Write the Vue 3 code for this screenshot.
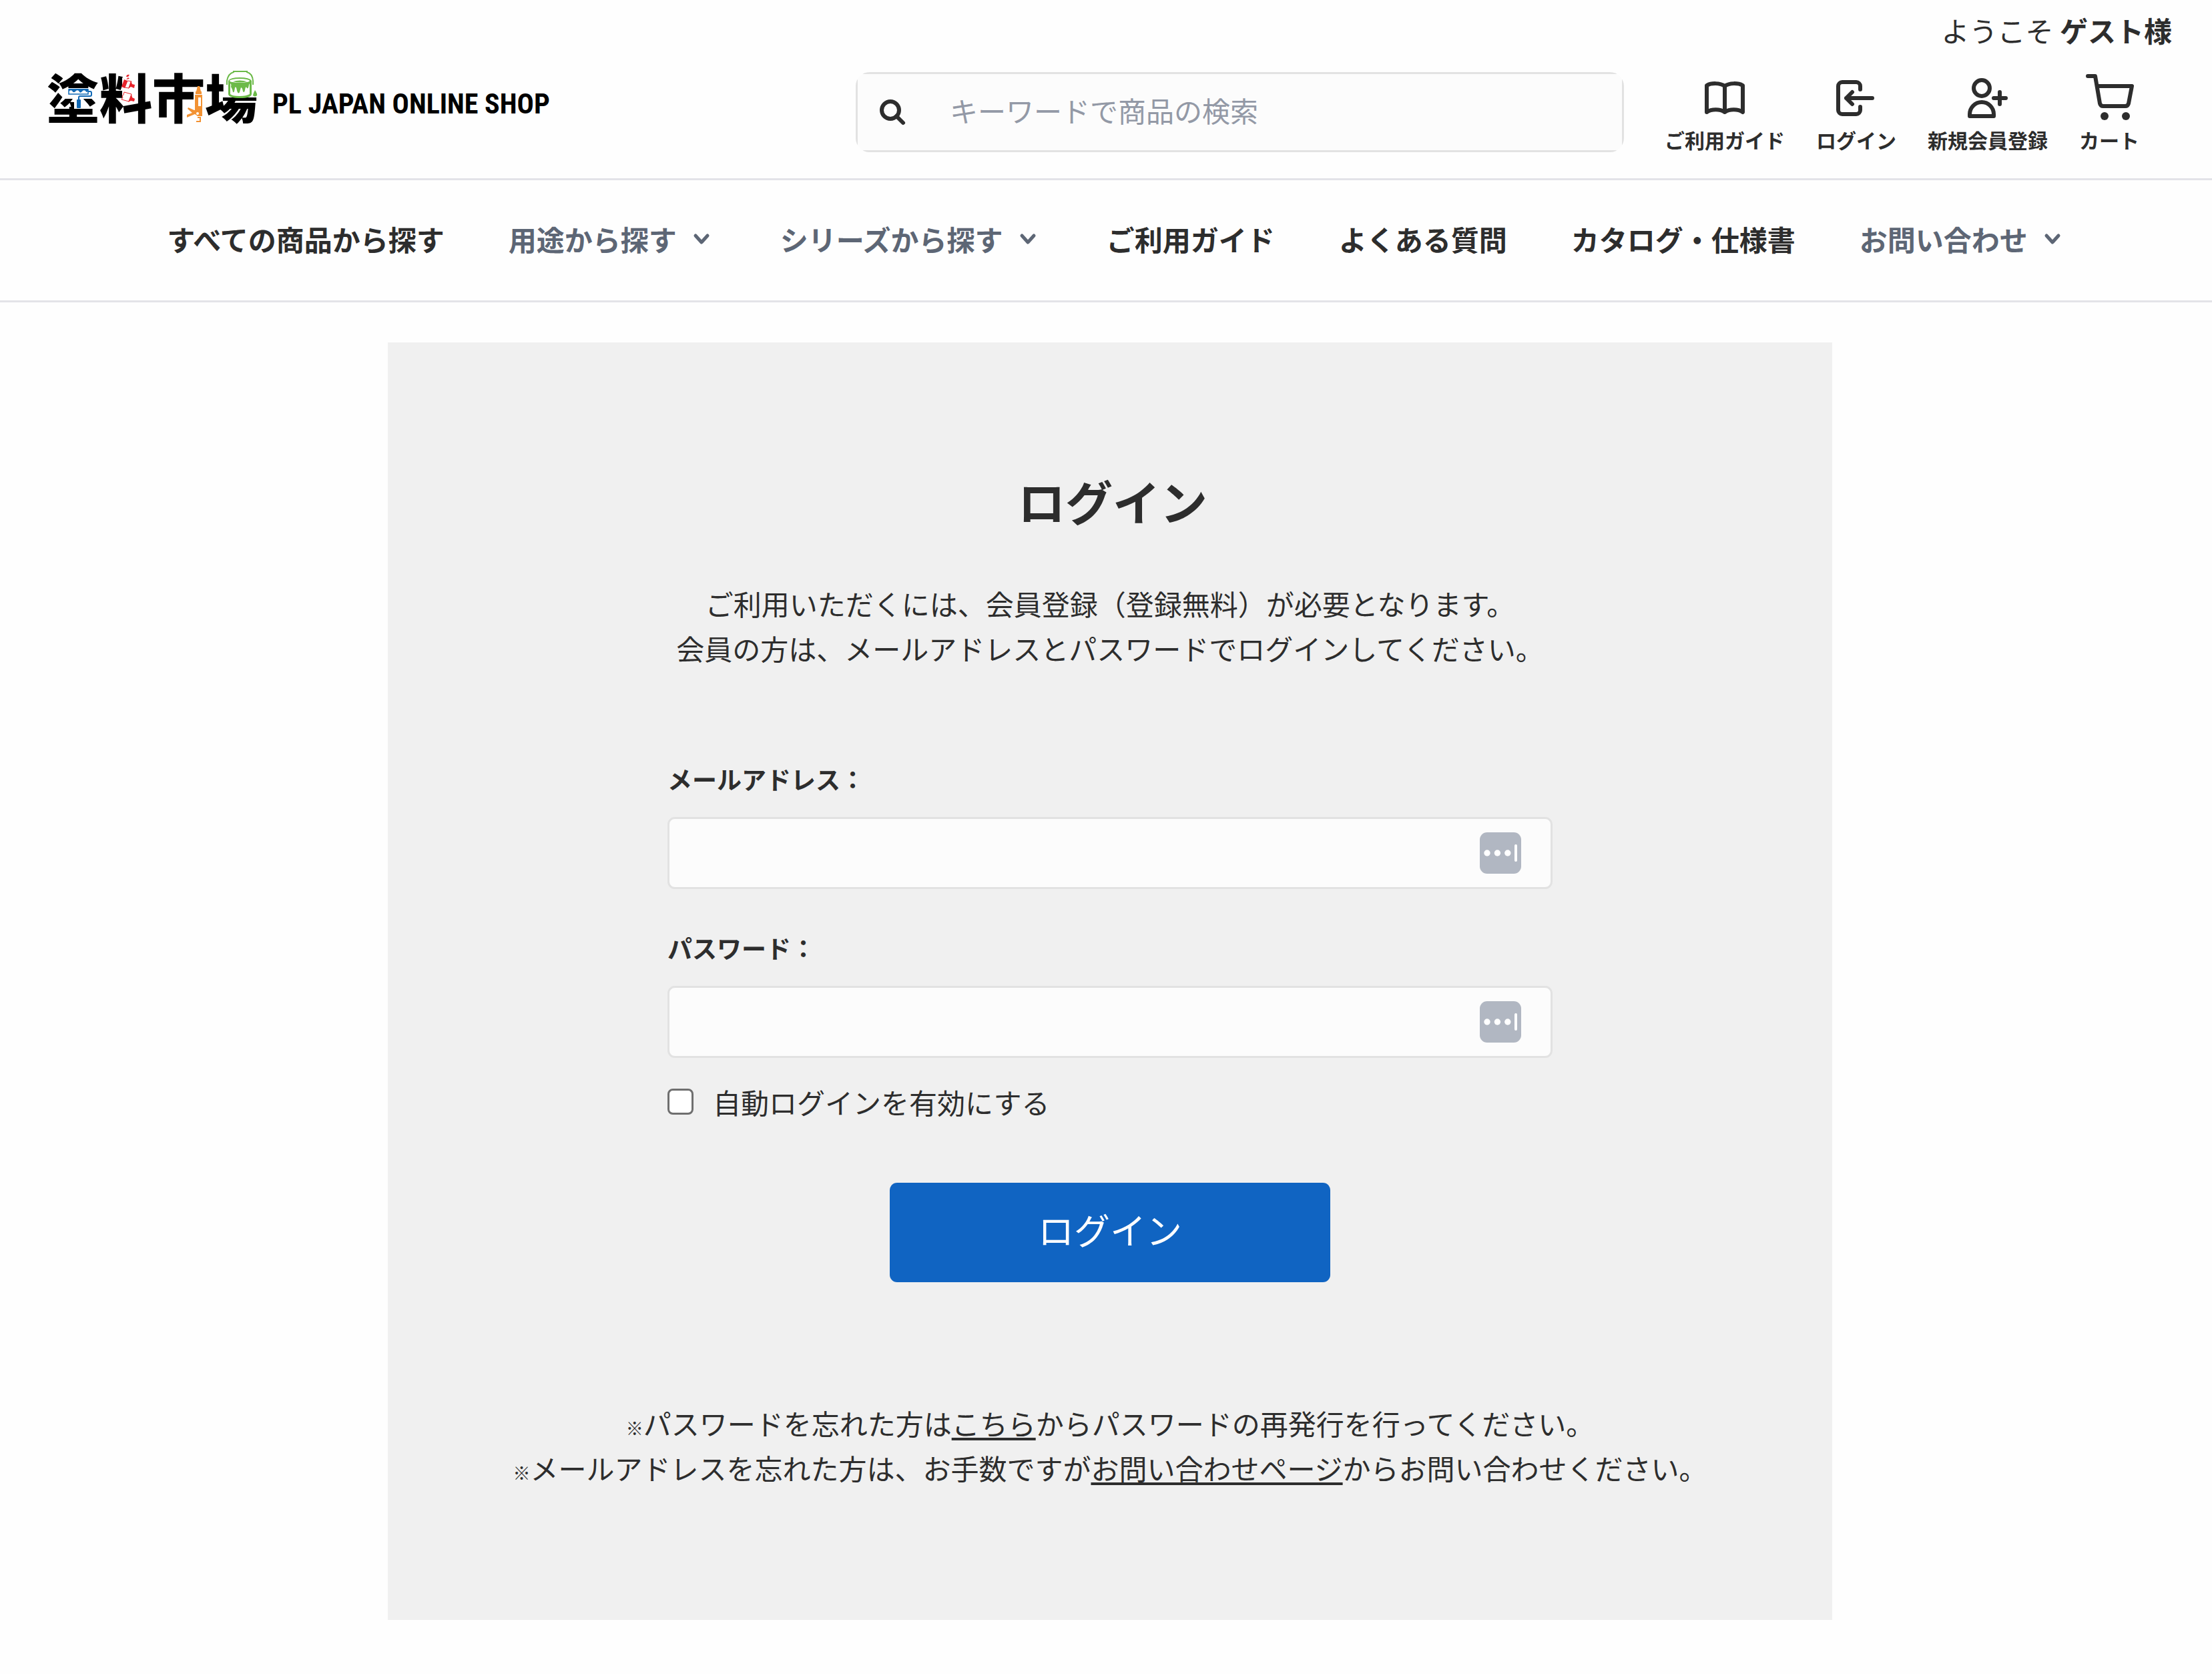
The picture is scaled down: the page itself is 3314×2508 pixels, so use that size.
<script setup>
import {ref} from "vue";

const keyword = ref('');
const email = ref('');
const password = ref('');
const autoLogin = ref(false);

const navItems = [
  {label: 'すべての商品から探す'},
  {label: '用途から探す', dropdown: true},
  {label: 'シリーズから探す', dropdown: true},
  {label: 'ご利用ガイド'},
  {label: 'よくある質問'},
  {label: 'カタログ・仕様書'},
  {label: 'お問い合わせ', dropdown: true},
];
</script>

<template>
  <header class="header">
    <p class="welcome">ようこそ <strong>ゲスト様</strong></p>
    <div class="header-main">
      <a class="logo" href="#">
        <svg class="logo-mark" viewBox="0 0 322 84">
          <text class="logo-kanji" x="0" y="73">塗料市場</text>
          <!-- roller -->
          <path fill="#fff" d="M30 27H66V30H72V43H54V58H41V43H24V30H30Z"/>
          <path fill="none" stroke="#1169b5" stroke-width="1.5" d="M33 29H62V36H33Z"/>
          <path fill="#1169b5" d="M33 28H62V31Q60 35 58 31Q55 29 53 32Q50 36 48 31Q45 29 43 32Q40 35 38 31Q36 29 33 32Z"/>
          <path fill="none" stroke="#1169b5" stroke-width="2" d="M62 32H65Q67 32 67 34V37Q67 39 65 39H50Q48 39 48 41V45"/>
          <rect x="45" y="44" width="6" height="13" rx="1" fill="#1169b5"/>
          <!-- brushes -->
          <path fill="#fff" d="M117 5H136V49H113V12Z"/>
          <g fill="#e8242b">
            <path d="M119 10Q120 6 124 7L122 10ZM119 14L122 11L124 13Z"/>
            <path d="M116 14L121 16L117 27L112 25Z"/>
            <path d="M126 16L128 21L132 22L131 27L126 25L122 28Z"/>
            <path d="M127 36L128 41L132 43L131 47L126 46L122 48Z"/>
          </g>
          <g fill="none" stroke="#e8242b" stroke-width="1">
            <path d="M121 16L127 17L123 27L117 26Z"/>
            <path d="M116 33L127 36L123 47L112 44L114 41L113 39L115 37Z"/>
          </g>
          <!-- caulking gun -->
          <path fill="#fff" d="M220 26H236V80H204V44H220Z"/>
          <path fill="#f29233" d="M226 24H229L231 32H232V36H223V32H224ZM222 37H233V69H226L222 66L210 71V67L218 64L211 58L212 56L221 60H222Z"/>
          <rect x="227" y="41" width="4" height="13" fill="#fff"/>
          <circle cx="226" cy="65" r="2" fill="#fff"/>
          <path fill="none" stroke="#f29233" stroke-width="2" d="M226 71H230V77H224"/>
          <!-- paint bucket -->
          <path fill="#fff" d="M268 0H317V41H262V35H268Z"/>
          <path fill="none" stroke="#6cba49" stroke-width="2" d="M271 21H270V16Q272 5 280 3V2H300V3Q308 5 309 16V21H308"/>
          <path fill="#6cba49" d="M272 16V36Q273 42 290 42Q306 42 307 36V16Q304 11 289 11Q275 11 272 16Z"/>
          <ellipse cx="289" cy="16" rx="15" ry="3" fill="#fff"/>
          <path fill="#6cba49" d="M279 17Q289 14 300 17Q289 20 279 17Z"/>
          <path fill="#fff" d="M275 20Q277 21 276 25Q278 28 279 33Q281 35 282 26Q284 24 285 31Q287 37 289 33L291 26Q293 26 294 32Q296 35 297 30Q298 23 300 27Q302 29 303 22L304 20V36Q299 39 289 39Q278 39 275 36Z"/>
          <path fill="#6cba49" d="M312 30Q316 36 315 38Q312 41 309 38Q309 36 312 30Z"/>
        </svg>
        <span class="logo-text">PL JAPAN ONLINE SHOP</span>
      </a>

      <form class="search" @submit.prevent>
        <div class="search-box">
          <button class="search-button" type="submit" aria-label="検索">
            <svg viewBox="0 0 40 40">
              <circle cx="17" cy="17" r="13"/>
              <path d="M26 26L36 36"/>
            </svg>
          </button>
          <input v-model="keyword" class="search-input" type="text" placeholder="キーワードで商品の検索" aria-label="キーワードで商品の検索">
        </div>
      </form>

      <div class="actions">
        <a class="action" href="#">
          <svg viewBox="0 0 72 72">
            <path d="M36 18C29 13 16 13 9 17V57C16 52 29 52 36 57C43 52 56 52 63 57V17C56 13 43 13 36 18V57"/>
          </svg>
          ご利用ガイド
        </a>
        <a class="action" href="#">
          <svg viewBox="0 0 72 72">
            <path d="M42 23V18a6 6 0 0 0-6-6H15a6 6 0 0 0-6 6V54a6 6 0 0 0 6 6H36a6 6 0 0 0 6-6V49M60 36H21M30 27L21 36L30 45"/>
          </svg>
          ログイン
        </a>
        <a class="action" href="#">
          <svg viewBox="0 0 72 72">
            <circle cx="27" cy="21" r="12"/>
            <path d="M9 60a18 18 0 0 1 36 0V63H9ZM54 27V45M45 36H63"/>
          </svg>
          新規会員登録
        </a>
        <a class="action" href="#">
          <svg viewBox="0 0 72 72">
            <path d="M4 3H15L22 44Q23 48 27 48H60Q64 48 65 44L70 18H18"/>
            <circle class="wheel" cx="29" cy="63" r="6"/>
            <circle class="wheel" cx="61" cy="63" r="6"/>
          </svg>
          カート
        </a>
      </div>
    </div>
  </header>

  <nav class="nav">
    <template v-for="item in navItems" :key="item.label">
      <button v-if="item.dropdown" class="nav-item nav-dropdown" type="button">
        {{ item.label }}
        <svg viewBox="0 0 42 42">
          <path d="M11 16L20 26L29 16"/>
        </svg>
      </button>
      <a v-else class="nav-item" href="#">{{ item.label }}</a>
    </template>
  </nav>

  <main class="main">
    <section class="panel">
      <h1>ログイン</h1>
      <p class="intro">
        ご利用いただくには、会員登録（登録無料）が必要となります。<br>
        会員の方は、メールアドレスとパスワードでログインしてください。
      </p>

      <form class="login-form" @submit.prevent>
        <div class="field">
          <label for="email">メールアドレス：</label>
          <div class="field-control">
            <input id="email" v-model="email" type="email">
            <svg class="key-icon" viewBox="0 0 62 62">
              <rect width="62" height="62" rx="11" fill="#b1b7c2"/>
              <path fill="#fff" d="M54 18a2 2 0 0 1 2 2V42a2 2 0 0 1-4 0V20a2 2 0 0 1 2-2Z"/>
              <circle cx="11" cy="31" r="4.7" fill="#fff"/>
              <circle cx="26.4" cy="31" r="4.7" fill="#fff"/>
              <circle cx="41.8" cy="31" r="4.7" fill="#fff"/>
            </svg>
          </div>
        </div>
        <div class="field">
          <label for="password">パスワード：</label>
          <div class="field-control">
            <input id="password" v-model="password" type="password">
            <svg class="key-icon" viewBox="0 0 62 62">
              <rect width="62" height="62" rx="11" fill="#b1b7c2"/>
              <path fill="#fff" d="M54 18a2 2 0 0 1 2 2V42a2 2 0 0 1-4 0V20a2 2 0 0 1 2-2Z"/>
              <circle cx="11" cy="31" r="4.7" fill="#fff"/>
              <circle cx="26.4" cy="31" r="4.7" fill="#fff"/>
              <circle cx="41.8" cy="31" r="4.7" fill="#fff"/>
            </svg>
          </div>
        </div>
        <label class="auto-login">
          <input v-model="autoLogin" type="checkbox">
          自動ログインを有効にする
        </label>
        <button class="login-button" type="submit">ログイン</button>
      </form>

      <p class="notes">
        <span class="mark">※</span>パスワードを忘れた方は<a href="#">こちら</a>からパスワードの再発行を行ってください。<br>
        <span class="mark">※</span>メールアドレスを忘れた方は、お手数ですが<a href="#">お問い合わせページ</a>からお問い合わせください。
      </p>
    </section>
  </main>
</template>

<style>
body {
  margin: 0;
  background: #fefefe;
}

#app {
  color: #2d2d2d;
  font-family: "Noto Sans CJK JP", "Liberation Sans", sans-serif;
  font-size: 42px;
  line-height: 67px;
}
</style>

<style scoped>
a {
  color: inherit;
  text-decoration: none;
}

p,
h1 {
  margin: 0;
}

button,
input {
  font: inherit;
  color: inherit;
}

button {
  padding: 0;
  border: 0;
  background: none;
  cursor: pointer;
}

svg {
  display: block;
  flex: none;
  overflow: visible;
}

.header {
  padding: 11px 60px 37px 70px;
  border-bottom: 3px solid #e3e3e8;
}

.welcome {
  text-align: right;
}

.header-main {
  display: flex;
  align-items: flex-start;
  margin-top: 26px;
  padding-right: 49px;
}

.logo {
  display: flex;
  align-items: center;
  gap: 16px;
  margin-right: auto;
  color: #000;
}

.logo-mark {
  width: 322px;
  height: 84px;
}

.logo-kanji {
  font-size: 79px;
  font-weight: 900;
}

.logo-text {
  padding-top: 18px;
  font-family: "Roboto Condensed", "Liberation Sans Narrow", "Liberation Sans", sans-serif;
  font-size: 42px;
  font-weight: 700;
  white-space: nowrap;
}

.search {
  flex: 0 1 1151px;
  margin-top: 4px;
  border-radius: 21px;
  overflow: hidden;
}

.search-box {
  display: flex;
  align-items: center;
  box-sizing: border-box;
  height: 120px;
  padding-left: 32px;
  border: 3px solid #e2e2e2;
  background: #fcfcfc;
}

.search-button svg {
  width: 40px;
  height: 40px;
  fill: none;
  stroke: #2d2d2d;
  stroke-width: 6;
  stroke-linecap: round;
}

.search-input {
  flex: 1;
  min-width: 0;
  height: 67px;
  margin-left: 66px;
  padding: 0 0 8px;
  border: 0;
  outline: 0;
  background: none;
}

.search-input::placeholder {
  color: #9399a6;
  opacity: 1;
}

.actions {
  display: flex;
  gap: 47px;
  margin-left: 61px;
  padding-top: 7px;
}

.action {
  display: flex;
  flex-direction: column;
  align-items: center;
  gap: 5px;
  font-size: 30px;
  font-weight: 700;
  line-height: 42px;
  white-space: nowrap;
}

.action svg {
  width: 72px;
  height: 72px;
  fill: none;
  stroke: #2d2d2d;
  stroke-width: 6;
  stroke-linecap: round;
  stroke-linejoin: round;
}

.action .wheel {
  fill: #2d2d2d;
  stroke: none;
}

.nav {
  display: flex;
  justify-content: center;
  gap: 96px;
  padding: 54px 0 59px 33px;
  border-bottom: 3px solid #e3e3e8;
}

.nav-item {
  font-weight: 700;
  white-space: nowrap;
}

.nav-dropdown {
  display: flex;
  align-items: center;
  gap: 17px;
  color: #5d6675;
}

.nav-dropdown svg {
  width: 42px;
  height: 42px;
  fill: none;
  stroke: #5d6675;
  stroke-width: 5;
  stroke-linecap: round;
  stroke-linejoin: round;
}

.main {
  padding: 60px 0 81px 12px;
}

.panel {
  box-sizing: border-box;
  max-width: 2164px;
  margin: 0 auto;
  padding: 187px 0 195px;
  background: #f0f0f0;
  text-align: center;
}

h1 {
  padding-left: 8px;
  font-size: 71px;
  font-weight: 700;
  line-height: 98px;
}

.intro {
  margin-top: 72px;
}

.login-form {
  max-width: 1326px;
  margin: 133px auto 0;
  text-align: left;
}

.field + .field {
  margin-top: 58px;
}

.field label {
  display: block;
  margin-bottom: 27px;
  font-size: 37px;
  font-weight: 700;
  line-height: 60px;
}

.field-control {
  position: relative;
}

.field-control input {
  display: block;
  box-sizing: border-box;
  width: 100%;
  height: 108px;
  padding: 0 130px 0 30px;
  border: 3px solid #e2e2e2;
  border-radius: 11px;
  background: #fcfcfc;
}

.key-icon {
  position: absolute;
  top: 23px;
  right: 47px;
  width: 62px;
  height: 62px;
}

.auto-login {
  display: flex;
  align-items: center;
  gap: 29px;
  margin-top: 32px;
}

.auto-login input {
  appearance: none;
  box-sizing: border-box;
  width: 39px;
  height: 39px;
  margin: 0;
  border: 3px solid #6f6f6f;
  border-radius: 8px;
  background: #fff;
}

.auto-login input:checked {
  background: #1064c2;
}

.login-button {
  display: block;
  width: 660px;
  height: 149px;
  margin: 88px auto 0;
  padding-bottom: 10px;
  border-radius: 11px;
  background: #1064c2;
  color: #fff;
  font-size: 54px;
}

.notes {
  margin-top: 177px;
}

.notes a {
  text-decoration: underline;
  text-decoration-thickness: 4px;
  text-underline-offset: 4px;
  text-decoration-skip-ink: none;
}

.mark {
  font-size: 26px;
  font-weight: 900;
  line-height: 1;
}
</style>
